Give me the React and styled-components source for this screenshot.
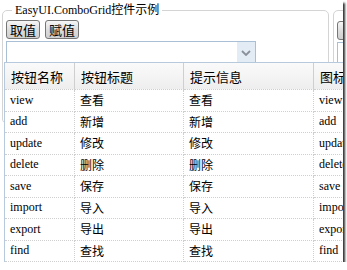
import React from "react";
import styled, { createGlobalStyle } from "styled-components";

const GlobalStyle = createGlobalStyle`
  html, body {
    margin: 0;
    padding: 0;
    background: #fff;
  }
  body {
    font-family: "Liberation Serif", "Noto Sans CJK SC", serif;
    font-size: 12px;
    color: #000;
  }
`;

const Frame = styled.div`
  position: relative;
  width: 343px;
  height: 262px;
  overflow: hidden;
  background: #fff;
  box-shadow: 2px 3px 2px rgba(0, 0, 0, 0.8);
`;

const Demos = styled.div`
  display: flex;
  gap: 4px;
  padding: 4px 0 0 2px;
  width: 700px;
`;

const Group = styled.fieldset`
  box-sizing: border-box;
  width: ${(p) => p.$width}px;
  height: 120px;
  margin: ${(p) => (p.$bare ? "6px" : "0")} 0 0;
  padding: 1px 0 0 3px;
  border: 1px solid #d4d4d4;
  border-radius: 5px;
`;

const Legend = styled.legend`
  padding: 0 3px;
  margin-left: 6px;
  font-size: 12px;
  line-height: 13px;
  font-family: "Liberation Serif", "Noto Sans CJK SC", serif;
`;

const Toolbar = styled.div`
  display: flex;
  gap: 5px;
  height: 19px;
  margin-top: ${(p) => (p.$bare ? 9 : 2)}px;
`;

const Button = styled.button`
  box-sizing: border-box;
  width: 34px;
  height: 19px;
  padding: 0;
  border: 1px solid #767676;
  border-radius: 3px;
  background: linear-gradient(#f6f6f6, #dcdcdc 55%, #cfcfcf);
  font-family: "Noto Sans CJK SC", sans-serif;
  font-size: 13px;
  line-height: 16px;
  color: #000;
`;

const Combo = styled.div`
  box-sizing: border-box;
  display: flex;
  width: 250px;
  height: 23px;
  margin-top: 2px;
  border: 1px solid #a9bfd6;
  background: #fff;
`;

const ComboText = styled.div`
  flex: 1;
`;

const ComboArrow = styled.div`
  width: 18px;
  display: flex;
  align-items: center;
  justify-content: center;
  background: #e3ebf5;
`;

const Panel = styled.div`
  position: absolute;
  left: 4px;
  top: 62px;
  width: 420px;
  border: 1px solid #b7c9dc;
  border-right: none;
  background: #fff;
`;

const Grid = styled.div`
  display: grid;
  grid-template-columns: 70px 109px 130px 100px;
  grid-template-rows: 27px repeat(8, 21.5px);
`;

const Cell = styled.div`
  box-sizing: border-box;
  display: flex;
  align-items: center;
  padding-left: ${(p) => (p.$head ? 6 : 5)}px;
  border-right: 1px ${(p) => (p.$head ? "solid" : "dotted")} #cfcfcf;
  border-bottom: 1px dotted #cfcfcf;
  background: ${(p) => (p.$head ? "linear-gradient(#fafafa, #eeeeee)" : "#fff")};
  font-size: ${(p) => (p.$head ? 13 : 12)}px;
  white-space: nowrap;
  overflow: hidden;
`;

const columns = ["按钮名称", "按钮标题", "提示信息", "图标样式"];
const rows = [
  ["view", "查看", "查看", "view"],
  ["add", "新增", "新增", "add"],
  ["update", "修改", "修改", "update"],
  ["delete", "删除", "删除", "delete"],
  ["save", "保存", "保存", "save"],
  ["import", "导入", "导入", "import"],
  ["export", "导出", "导出", "export"],
  ["find", "查找", "查找", "find"],
];

const Chevron = () => (
  <svg width="10" height="6" viewBox="0 0 10 6">
    <path d="M1 1 L5 5 L9 1" fill="none" stroke="#8a9099" strokeWidth="1.8" />
  </svg>
);

export default function App() {
  return (
    <>
      <GlobalStyle />
      <Frame>
        <Demos>
          <Group $width={327}>
            <Legend>EasyUI.ComboGrid控件示例</Legend>
            <Toolbar>
              <Button>取值</Button>
              <Button>赋值</Button>
            </Toolbar>
            <Combo>
              <ComboText />
              <ComboArrow>
                <Chevron />
              </ComboArrow>
            </Combo>
          </Group>
          <Group $width={327} $bare>
            <Toolbar $bare>
              <Button />
              <Button />
            </Toolbar>
            <Combo>
              <ComboText />
              <ComboArrow>
                <Chevron />
              </ComboArrow>
            </Combo>
          </Group>
        </Demos>
        <Panel>
          <Grid>
            {columns.map((c) => (
              <Cell key={c} $head>
                {c}
              </Cell>
            ))}
            {rows.map((r) =>
              r.map((v, i) => <Cell key={r[0] + i}>{v}</Cell>)
            )}
          </Grid>
        </Panel>
      </Frame>
    </>
  );
}
